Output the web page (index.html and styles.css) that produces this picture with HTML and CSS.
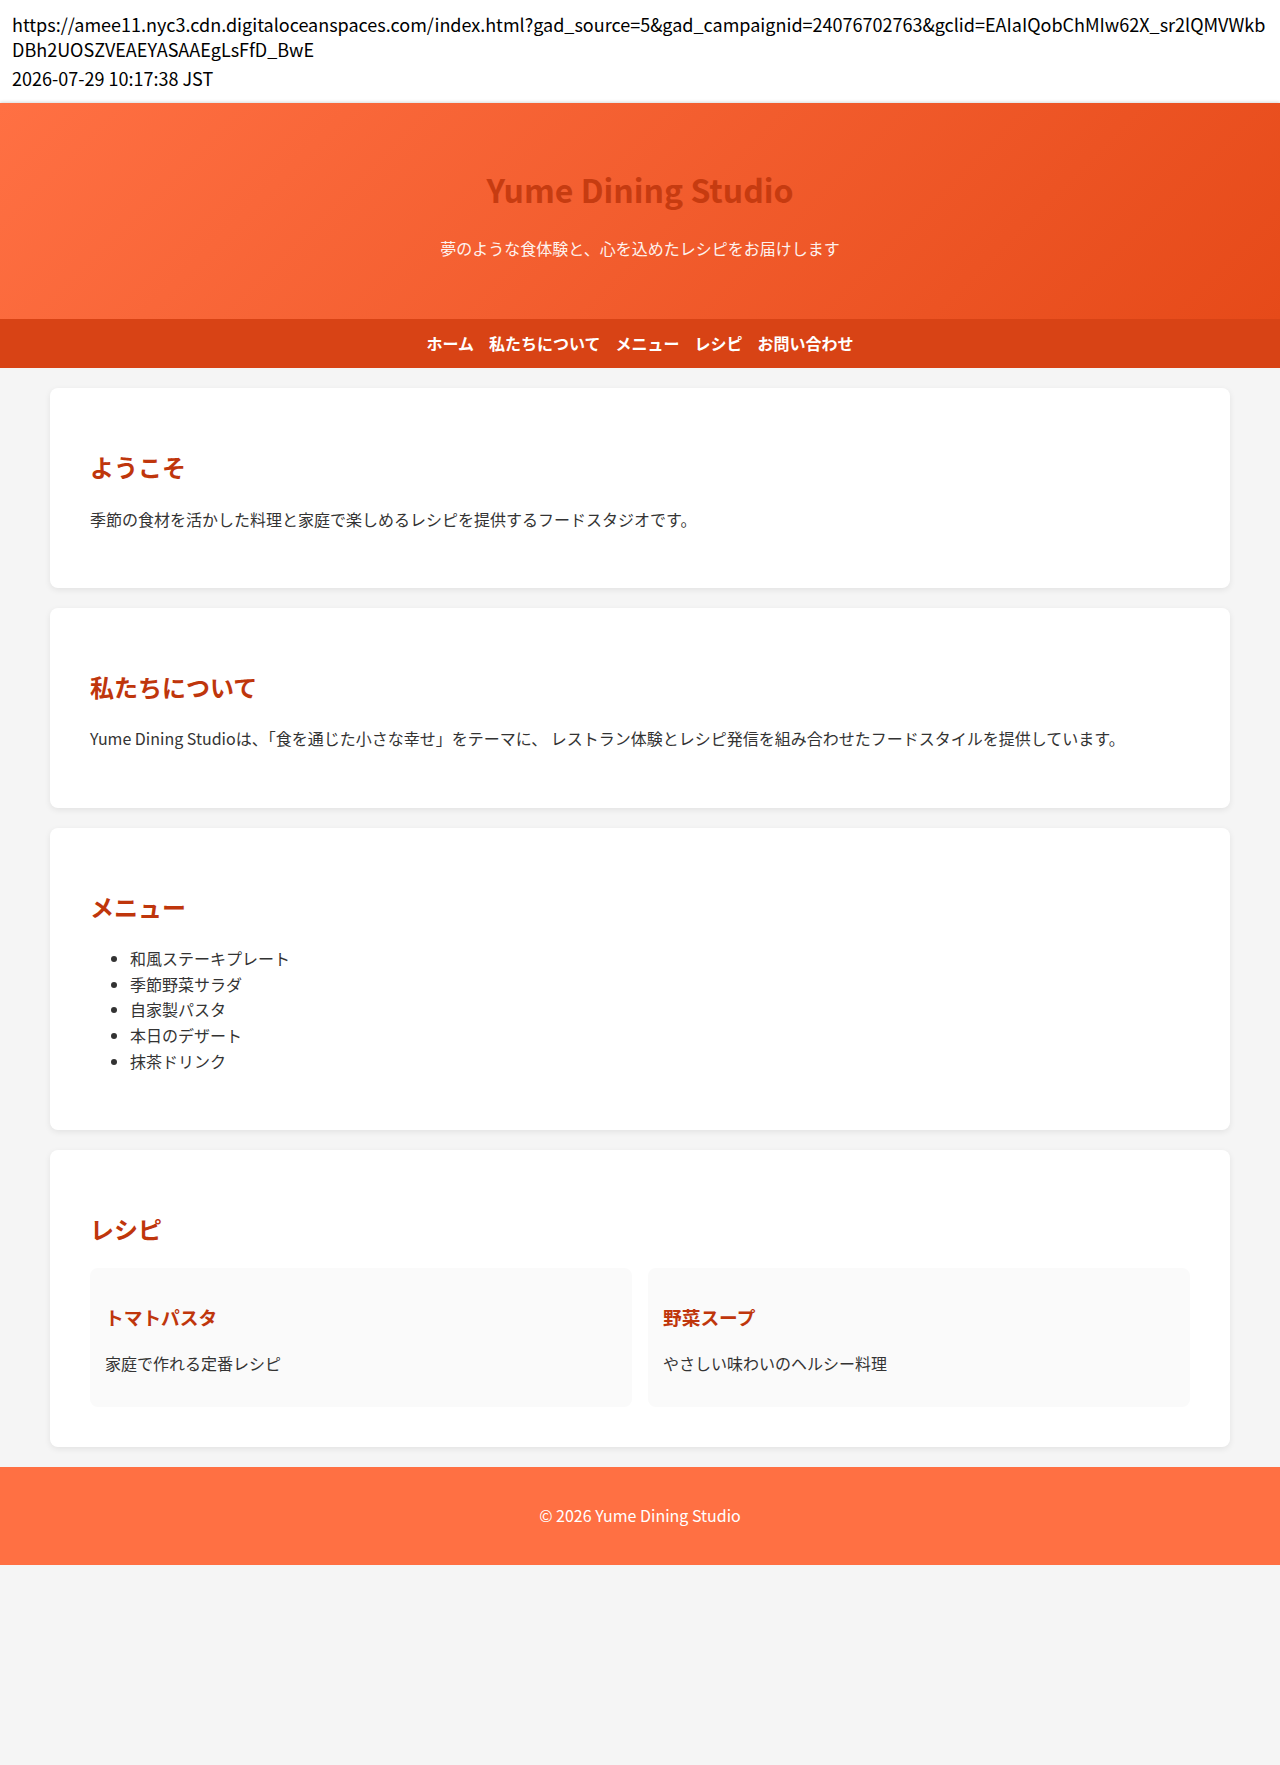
FILE: index.html
```html
<!DOCTYPE html>
<html lang="ja">
<head>
    <meta charset="utf-8">
    <title>Yume Dining Studio</title>
    <link rel="stylesheet" href="styles.css">
</head>
<body>
    <div class="capture">
        <div class="capture-url">https://amee11.nyc3.cdn.digitaloceanspaces.com/index.html?gad_source=5&amp;gad_campaignid=24076702763&amp;gclid=EAIaIQobChMIw62X_sr2lQMVWkb<br>DBh2UOSZVEAEYASAAEgLsFfD_BwE</div>
        <div class="capture-time">2026-07-29 10:17:38 JST</div>
    </div>

    <header class="site-header">
        <h1>Yume Dining Studio</h1>
        <p>夢のような食体験と、心を込めたレシピをお届けします</p>
    </header>

    <nav class="site-nav">
        <a href="#">ホーム</a>
        <a href="#about">私たちについて</a>
        <a href="#menu">メニュー</a>
        <a href="#recipe">レシピ</a>
        <a href="#contact">お問い合わせ</a>
    </nav>

    <main class="container">
        <section class="card">
            <h2>ようこそ</h2>
            <p>季節の食材を活かした料理と家庭で楽しめるレシピを提供するフードスタジオです。</p>
        </section>

        <section class="card" id="about">
            <h2>私たちについて</h2>
            <p>Yume Dining Studioは、「食を通じた小さな幸せ」をテーマに、 レストラン体験とレシピ発信を組み合わせたフードスタイルを提供しています。</p>
        </section>

        <section class="card" id="menu">
            <h2>メニュー</h2>
            <ul>
                <li>和風ステーキプレート</li>
                <li>季節野菜サラダ</li>
                <li>自家製パスタ</li>
                <li>本日のデザート</li>
                <li>抹茶ドリンク</li>
            </ul>
        </section>

        <section class="card" id="recipe">
            <h2>レシピ</h2>
            <div class="recipe-grid">
                <div class="recipe">
                    <h3>トマトパスタ</h3>
                    <p>家庭で作れる定番レシピ</p>
                </div>
                <div class="recipe">
                    <h3>野菜スープ</h3>
                    <p>やさしい味わいのヘルシー料理</p>
                </div>
            </div>
        </section>
    </main>

    <footer class="site-footer" id="contact">
        <p>&copy; 2026 Yume Dining Studio</p>
    </footer>
</body>
</html>
```

FILE: styles.css
```css
body {
    margin: 0;
    background-color: #f5f5f5;
    color: #333;
    font-family: "Noto Sans CJK JP", "Noto Sans", sans-serif;
    font-size: 16px;
    line-height: 1.6;
}

/* capture info above the page */
.capture {
    background-color: #fff;
    color: #000;
    font-size: 18px;
    line-height: 25px;
    padding: 12px 12px 12px;
}

.capture-time {
    margin-top: 4px;
}

.site-header {
    background: linear-gradient(135deg, #ff7043, #e64a19);
    text-align: center;
    padding: 40px 20px 41px;
    box-shadow: 0 -1px 3px rgba(0, 0, 0, 0.15);
}

.site-header h1 {
    color: #bf360c;
    font-size: 32px;
    margin: 21px 0;
    opacity: 0.85;
}

.site-header p {
    color: #fff;
    opacity: 0.92;
    margin: 16px 0;
}

.site-nav {
    background-color: #d84315;
    display: flex;
    justify-content: center;
    gap: 15px;
    padding: 12px 0;
}

.site-nav a {
    color: #fff;
    font-weight: bold;
    text-decoration: none;
}

.container {
    max-width: 1180px;
    margin: 20px auto;
}

.card {
    background-color: #fff;
    border-radius: 8px;
    box-shadow: 0 2px 6px rgba(0, 0, 0, 0.08);
    padding: 40px;
    margin-bottom: 20px;
}

.card h2 {
    color: #bf360c;
    font-size: 24px;
}

.recipe-grid {
    display: grid;
    grid-template-columns: 1fr 1fr;
    gap: 16px;
}

.recipe {
    background-color: #fafafa;
    border-radius: 8px;
    padding: 15px;
}

.recipe h3 {
    color: #bf360c;
}

.site-footer {
    background-color: #ff7043;
    color: #fff;
    text-align: center;
    padding: 20px;
}
```
